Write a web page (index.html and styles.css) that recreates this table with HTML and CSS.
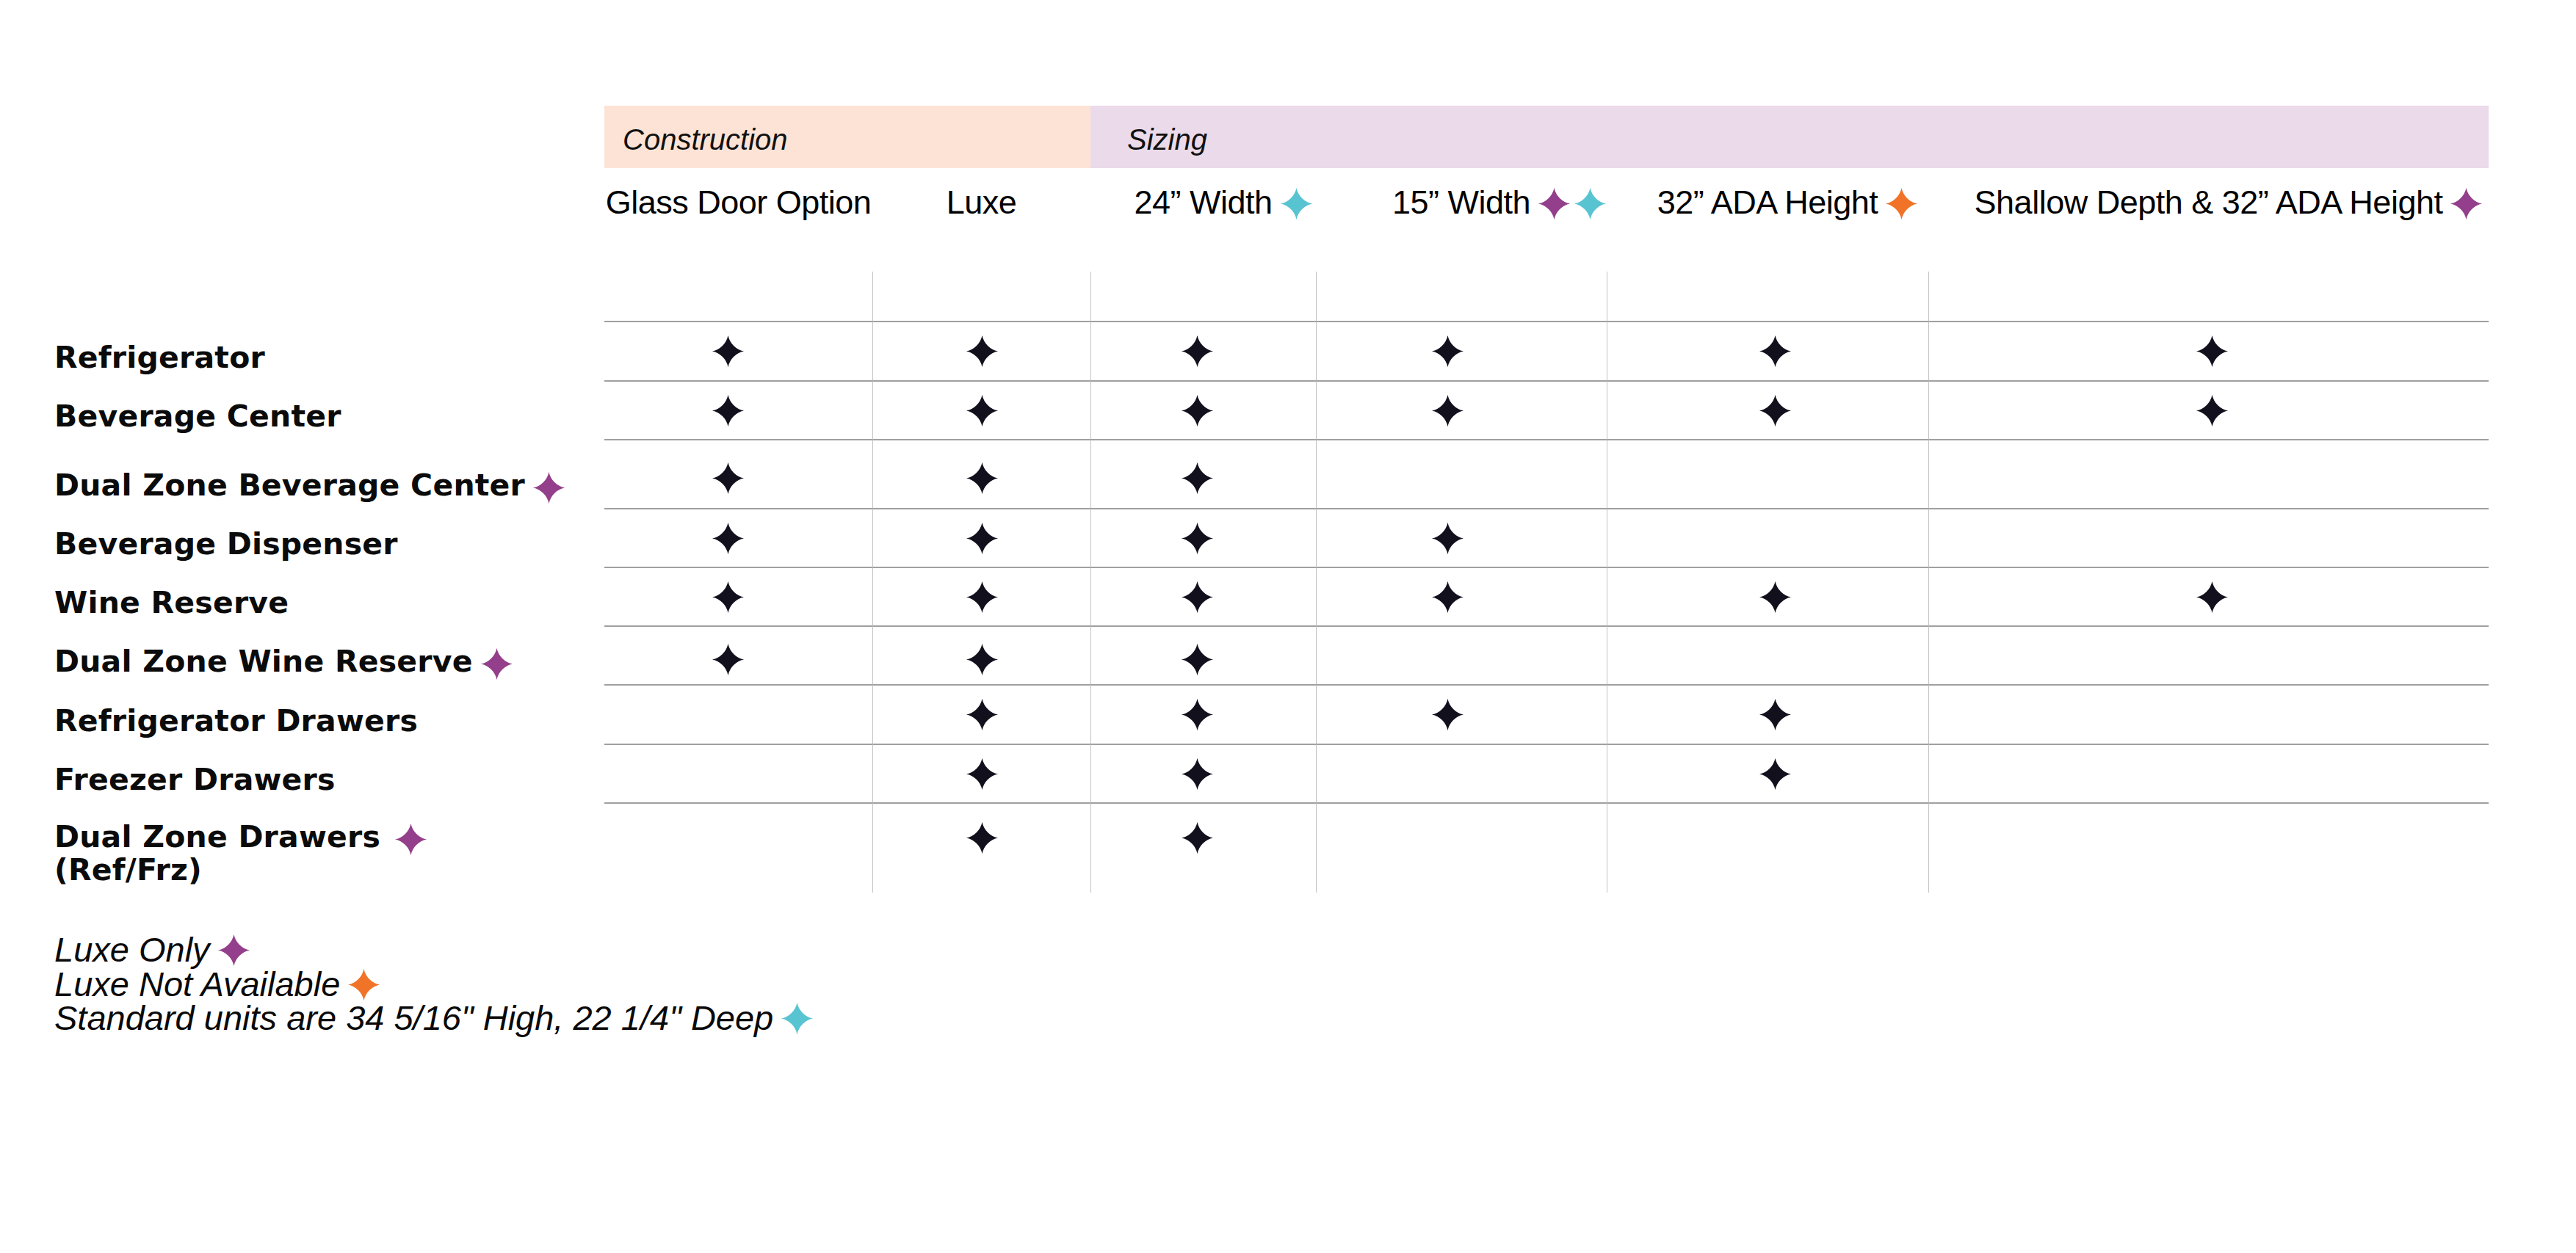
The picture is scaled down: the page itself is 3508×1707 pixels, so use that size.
FILE: index.html
```html
<!DOCTYPE html>
<html lang="en">
<head>
<meta charset="utf-8">
<title>Refrigeration Product Chart</title>
<link rel="stylesheet" href="styles.css">
</head>
<body>
<svg class="defs" width="0" height="0" aria-hidden="true">
  <symbol id="star" viewBox="0 0 100 100">
    <path d="M50 0A65 65 0 0 0 100 50A65 65 0 0 0 50 100A65 65 0 0 0 0 50A65 65 0 0 0 50 0Z"/>
  </symbol>
</svg>
<main class="page">
  <div class="chart">
    <div class="row bands">
      <div class="band band-construction">Construction</div>
      <div class="band band-sizing">Sizing</div>
    </div>

    <div class="row head">
      <div></div>
      <div class="hcell">Glass Door Option</div>
      <div class="hcell">Luxe</div>
      <div class="hcell">24” Width<span class="hmarks"><svg class="cyan"><use href="#star"/></svg></span></div>
      <div class="hcell">15” Width<span class="hmarks two"><svg class="purple"><use href="#star"/></svg><svg class="cyan"><use href="#star"/></svg></span></div>
      <div class="hcell">32” ADA Height<span class="hmarks"><svg class="orange"><use href="#star"/></svg></span></div>
      <div class="hcell">Shallow Depth &amp; 32” ADA Height<span class="hmarks"><svg class="purple"><use href="#star"/></svg></span></div>
    </div>

    <div class="row spacer">
      <div></div>
      <div class="cell c1"></div><div class="cell c2"></div><div class="cell c3"></div><div class="cell c4"></div><div class="cell c5"></div><div class="cell c6"></div>
    </div>

    <div class="row data r81">
      <div class="label">Refrigerator</div>
      <div class="cell c1"><svg class="tick"><use href="#star"/></svg></div>
      <div class="cell c2"><svg class="tick"><use href="#star"/></svg></div>
      <div class="cell c3"><svg class="tick"><use href="#star"/></svg></div>
      <div class="cell c4"><svg class="tick"><use href="#star"/></svg></div>
      <div class="cell c5"><svg class="tick"><use href="#star"/></svg></div>
      <div class="cell c6"><svg class="tick"><use href="#star"/></svg></div>
    </div>

    <div class="row data r80">
      <div class="label">Beverage Center</div>
      <div class="cell c1"><svg class="tick"><use href="#star"/></svg></div>
      <div class="cell c2"><svg class="tick"><use href="#star"/></svg></div>
      <div class="cell c3"><svg class="tick"><use href="#star"/></svg></div>
      <div class="cell c4"><svg class="tick"><use href="#star"/></svg></div>
      <div class="cell c5"><svg class="tick"><use href="#star"/></svg></div>
      <div class="cell c6"><svg class="tick"><use href="#star"/></svg></div>
    </div>

    <div class="row data r94 low">
      <div class="label">Dual Zone Beverage Center<svg class="mark purple"><use href="#star"/></svg></div>
      <div class="cell c1"><svg class="tick"><use href="#star"/></svg></div>
      <div class="cell c2"><svg class="tick"><use href="#star"/></svg></div>
      <div class="cell c3"><svg class="tick"><use href="#star"/></svg></div>
      <div class="cell c4"></div>
      <div class="cell c5"></div>
      <div class="cell c6"></div>
    </div>

    <div class="row data r80">
      <div class="label">Beverage Dispenser</div>
      <div class="cell c1"><svg class="tick"><use href="#star"/></svg></div>
      <div class="cell c2"><svg class="tick"><use href="#star"/></svg></div>
      <div class="cell c3"><svg class="tick"><use href="#star"/></svg></div>
      <div class="cell c4"><svg class="tick"><use href="#star"/></svg></div>
      <div class="cell c5"></div>
      <div class="cell c6"></div>
    </div>

    <div class="row data r80">
      <div class="label">Wine Reserve</div>
      <div class="cell c1"><svg class="tick"><use href="#star"/></svg></div>
      <div class="cell c2"><svg class="tick"><use href="#star"/></svg></div>
      <div class="cell c3"><svg class="tick"><use href="#star"/></svg></div>
      <div class="cell c4"><svg class="tick"><use href="#star"/></svg></div>
      <div class="cell c5"><svg class="tick"><use href="#star"/></svg></div>
      <div class="cell c6"><svg class="tick"><use href="#star"/></svg></div>
    </div>

    <div class="row data r80 low">
      <div class="label">Dual Zone Wine Reserve<svg class="mark purple"><use href="#star"/></svg></div>
      <div class="cell c1"><svg class="tick"><use href="#star"/></svg></div>
      <div class="cell c2"><svg class="tick"><use href="#star"/></svg></div>
      <div class="cell c3"><svg class="tick"><use href="#star"/></svg></div>
      <div class="cell c4"></div>
      <div class="cell c5"></div>
      <div class="cell c6"></div>
    </div>

    <div class="row data r81">
      <div class="label">Refrigerator Drawers</div>
      <div class="cell c1"></div>
      <div class="cell c2"><svg class="tick"><use href="#star"/></svg></div>
      <div class="cell c3"><svg class="tick"><use href="#star"/></svg></div>
      <div class="cell c4"><svg class="tick"><use href="#star"/></svg></div>
      <div class="cell c5"><svg class="tick"><use href="#star"/></svg></div>
      <div class="cell c6"></div>
    </div>

    <div class="row data r80">
      <div class="label">Freezer Drawers</div>
      <div class="cell c1"></div>
      <div class="cell c2"><svg class="tick"><use href="#star"/></svg></div>
      <div class="cell c3"><svg class="tick"><use href="#star"/></svg></div>
      <div class="cell c4"></div>
      <div class="cell c5"><svg class="tick"><use href="#star"/></svg></div>
      <div class="cell c6"></div>
    </div>

    <div class="row data r123 high">
      <div class="label">Dual Zone Drawers<svg class="mark far purple"><use href="#star"/></svg><br>(Ref/Frz)</div>
      <div class="cell c1"></div>
      <div class="cell c2"><svg class="tick"><use href="#star"/></svg></div>
      <div class="cell c3"><svg class="tick"><use href="#star"/></svg></div>
      <div class="cell c4"></div>
      <div class="cell c5"></div>
      <div class="cell c6"></div>
    </div>
  </div>

  <div class="legend">
    <p>Luxe Only<svg class="mark purple"><use href="#star"/></svg></p>
    <p>Luxe Not Available<svg class="mark orange"><use href="#star"/></svg></p>
    <p>Standard units are 34 5/16" High, 22 1/4" Deep<svg class="mark cyan"><use href="#star"/></svg></p>
  </div>
</main>
</body>
</html>
```

FILE: styles.css
```css
* { box-sizing: border-box; }

html, body {
  margin: 0;
  padding: 0;
  background: #ffffff;
}

body {
  width: 3508px;
  height: 1707px;
  overflow: hidden;
  font-family: "Liberation Sans", Arial, sans-serif;
  color: #0a0a0a;
}

.defs {
  position: absolute;
  width: 0;
  height: 0;
  overflow: hidden;
}

.page {
  padding: 144px 0 0 74px;
}

.row {
  display: grid;
  grid-template-columns: 749px 365px 297px 307px 396px 438px 763px;
}

/* group bands */
.bands { height: 85px; }

.band {
  padding-top: 26px;
  font-style: italic;
  font-size: 40px;
  line-height: 40px;
  color: #111111;
}

.band-construction {
  grid-column: 2 / 4;
  background: #fde3d6;
  padding-left: 25px;
}

.band-sizing {
  grid-column: 4 / 8;
  background: #ebdaea;
  padding-left: 50px;
}

/* column headings */
.head { height: 141px; }

.hcell {
  padding-top: 24px;
  text-align: center;
  font-size: 45px;
  line-height: 45px;
  letter-spacing: -0.5px;
  white-space: nowrap;
  color: #000000;
}

.hmarks { margin-right: -54px; letter-spacing: 0; }
.hmarks.two { margin-right: -103px; }

.hmarks svg {
  width: 43px;
  height: 43px;
  margin-left: 11px;
  margin-bottom: -8px;
  vertical-align: baseline;
}

.hmarks svg + svg { margin-left: 6px; }

/* grid */
.spacer { height: 67px; }

.r81 { height: 81px; }
.r80 { height: 80px; }
.r94 { height: 94px; }
.r123 { height: 123px; }

.cell {
  display: flex;
  align-items: center;
  justify-content: center;
}

.cell.c2, .cell.c3, .cell.c4, .cell.c5, .cell.c6 {
  border-left: 1px solid #c2c2c2;
}

.data .cell { border-top: 2px solid #a0a0a0; }

.cell.c1 { padding-right: 28px; }
.cell.c3 { padding-right: 18px; }
.cell.c4 { padding-right: 38px; }
.cell.c5 { padding-left: 20px; }
.cell.c6 { padding-left: 8px; }

.low .cell { padding-top: 11px; }
.high .cell { padding-bottom: 29px; }

.tick {
  width: 43px;
  height: 43px;
  fill: #12101c;
}

/* row labels */
.label {
  align-self: end;
  padding-bottom: 9px;
  font-family: "DejaVu Sans", "Liberation Sans", sans-serif;
  font-weight: bold;
  font-size: 41px;
  line-height: 44.5px;
  letter-spacing: 0.2px;
  color: #0b0b0b;
  white-space: nowrap;
}

.mark {
  width: 43px;
  height: 43px;
  margin-left: 11px;
  margin-bottom: -11px;
  vertical-align: baseline;
}

.mark.far { margin-left: 20px; }

/* legend */
.legend {
  margin-top: 55px;
  font-style: italic;
  font-size: 47px;
  line-height: 46.5px;
  color: #0a0a0a;
}

.legend p { margin: 0; white-space: nowrap; }

.legend .mark {
  margin-left: 11px;
  margin-bottom: -6px;
}

.purple { fill: #943f8b; }
.orange { fill: #f07328; }
.cyan { fill: #58c4d1; }
```
